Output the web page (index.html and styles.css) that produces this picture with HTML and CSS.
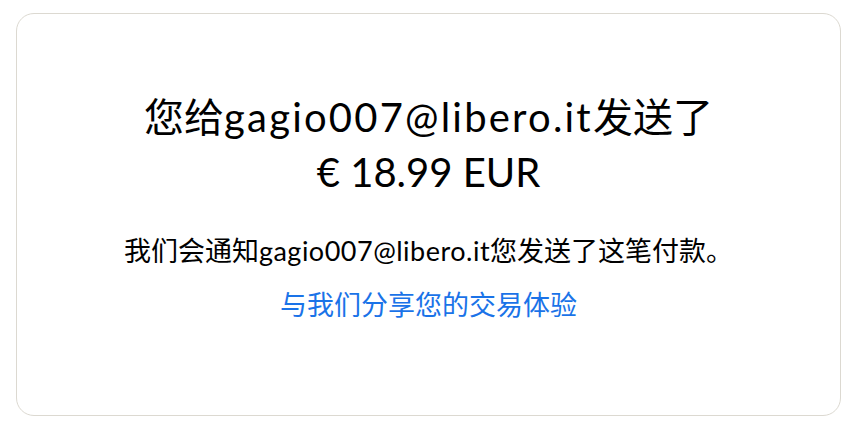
FILE: index.html
```html
<!DOCTYPE html>
<html>
<head lang="zh">
    <meta charset="UTF-8">
    <title>付款已发送</title>
    <link rel="stylesheet" href="styles.css">
</head>
<body>
    <div class="card">
        <h1 class="title">您给<span class="mail">gagio007@libero.it</span>发送了<br>€ 18.99 EUR</h1>
        <p class="note">我们会通知<span class="mail">gagio007@libero.it</span>您发送了这笔付款。</p>
        <a class="share" href="#">与我们分享您的交易体验</a>
    </div>
</body>
</html>
```

FILE: styles.css
```css
* {
    margin: 0;
    padding: 0;
}
body {
    background: #fff;
    font-family: Lato, "Noto Sans CJK SC", sans-serif;
    color: #000;
    padding: 13px 9px 12px 16px;
}
.card {
    height: 403px;
    border: 1px solid #dcd9d1;
    border-radius: 18px;
    padding-top: 76px;
    box-sizing: border-box;
    text-align: center;
}
.title {
    font-size: 40px;
    font-weight: normal;
    line-height: 55px;
}
.title .mail {
    letter-spacing: 2.2px;
}
.note {
    margin-top: 33px;
    font-size: 27px;
    line-height: 36px;
}
.note .mail {
    letter-spacing: 0.5px;
}
.share {
    display: inline-block;
    margin-top: 18px;
    font-size: 27px;
    line-height: 36px;
    color: #1a73e8;
    text-decoration: none;
}
```
